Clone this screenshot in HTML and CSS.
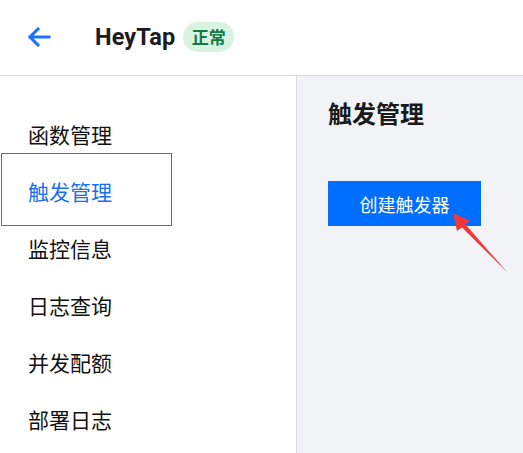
FILE: index.html
```html
<!DOCTYPE html>
<html lang="zh-CN">
<head>
<meta charset="utf-8">
<title>HeyTap</title>
<link rel="stylesheet" href="styles.css">
</head>
<body>
<div class="app">
  <header class="topbar">
    <svg class="back" width="24" height="20" viewBox="0 0 24 20">
      <path d="M22 10H3M11 2L3 10L11 18" fill="none" stroke="#1a73ff" stroke-width="3" stroke-linecap="square" stroke-linejoin="miter"/>
    </svg>
    <span class="app-name">HeyTap</span>
    <span class="badge">正常</span>
  </header>
  <div class="body">
    <nav class="sidebar">
      <div class="nav-item">函数管理</div>
      <div class="nav-item active">触发管理</div>
      <div class="nav-item">监控信息</div>
      <div class="nav-item">日志查询</div>
      <div class="nav-item">并发配额</div>
      <div class="nav-item">部署日志</div>
    </nav>
    <main class="main">
      <h1 class="title">触发管理</h1>
      <button class="btn">创建触发器</button>
    </main>
  </div>
  <svg class="pointer" width="523" height="453" viewBox="0 0 523 453">
    <path d="M453 213 L470 221 L465.5 224.5 L508 273 L462 227.5 L457 231 Z" fill="#f4383a"/>
  </svg>
</div>
</body>
</html>
```

FILE: styles.css
```css
* { box-sizing: border-box; }
html, body { margin: 0; padding: 0; }
body {
  width: 523px;
  height: 453px;
  overflow: hidden;
  background: #fff;
  font-family: "Noto Sans CJK SC", "Noto Sans", sans-serif;
  color: #111;
}
.app {
  position: relative;
  width: 523px;
  height: 453px;
  display: flex;
  flex-direction: column;
}
.topbar {
  height: 76px;
  flex: none;
  border-bottom: 1px solid #d8dbe2;
  display: flex;
  align-items: center;
  padding-left: 27px;
  padding-bottom: 2px;
}
.back { display: block; margin-right: 44px; }
.app-name {
  font-family: Roboto, "Noto Sans", sans-serif;
  font-weight: 700;
  font-size: 23.5px;
  color: #1c1c1f;
  letter-spacing: 0.1px;
}
.badge {
  margin-left: 8px;
  height: 30px;
  width: 51px;
  border-radius: 15px;
  background: #d8f3e2;
  color: #157a42;
  font-weight: 700;
  font-size: 17px;
  display: flex;
  align-items: center;
  justify-content: center;
}
.body {
  flex: 1;
  display: flex;
}
.sidebar {
  width: 297px;
  flex: none;
  border-right: 1px solid #d8dbe2;
  padding-top: 30px;
}
.nav-item {
  position: relative;
  height: 57px;
  line-height: 57px;
  padding-left: 28px;
  font-size: 21px;
  color: #111;
}
.nav-item.active { color: #1a6ef5; }
.nav-item.active::after {
  content: "";
  position: absolute;
  left: 1px;
  top: -10px;
  width: 169px;
  height: 71px;
  border: 1px solid #e0393c;
}
.main {
  flex: 1;
  background: #f2f3f7;
  padding-left: 31px;
  padding-top: 21px;
}
.title {
  margin: 0;
  font-size: 24px;
  font-weight: 700;
  line-height: 32px;
  color: #1a1a1a;
}
.btn {
  display: block;
  margin-top: 52px;
  width: 153px;
  height: 45px;
  border: none;
  background: #006eff;
  color: #fff;
  font-family: "Noto Sans CJK SC", sans-serif;
  font-size: 18px;
  padding: 0;
}
.pointer {
  position: absolute;
  left: 0;
  top: 0;
  pointer-events: none;
}
```
